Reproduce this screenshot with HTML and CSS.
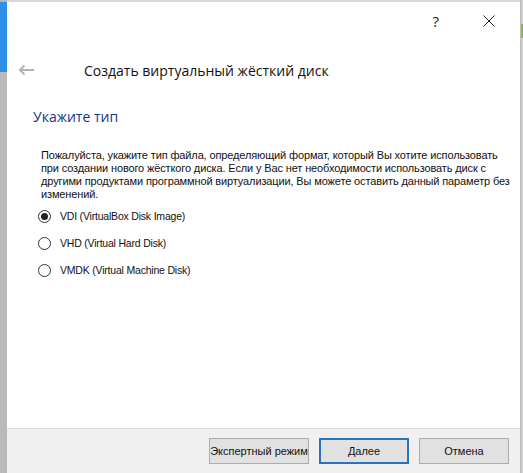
FILE: index.html
```html
<!DOCTYPE html>
<html lang="ru">
<head>
<meta charset="utf-8">
<link rel="stylesheet" href="styles.css">
</head>
<body>
<div class="desk">
  <div class="strip"><div class="strip-blue"></div></div>
  <div class="window">
    <div class="titlebar">
      <span class="tb-help">?</span>
      <span class="tb-close">
        <svg width="12" height="12" viewBox="0 0 12 12"><path d="M0.5 0.5 L11.5 11.5 M11.5 0.5 L0.5 11.5" stroke="#222" stroke-width="1" fill="none"/></svg>
      </span>
    </div>
    <div class="header">
      <svg class="back" width="16" height="12" viewBox="0 0 16 12"><path d="M16 6 H2 M6.5 1.5 L2 6 L6.5 10.5" stroke="#b4b4b4" stroke-width="2" fill="none"/></svg>
      <span class="title">Создать виртуальный жёсткий диск</span>
    </div>
    <div class="content">
      <h2 class="section">Укажите тип</h2>
      <p class="desc">Пожалуйста, укажите тип файла, определяющий формат, который Вы хотите использовать при создании нового жёсткого диска. Если у Вас нет необходимости использовать диск с другими продуктами программной виртуализации, Вы можете оставить данный параметр без изменений.</p>
      <div class="options">
        <label class="opt"><span class="radio checked"></span>VDI (VirtualBox Disk Image)</label>
        <label class="opt"><span class="radio"></span>VHD (Virtual Hard Disk)</label>
        <label class="opt"><span class="radio"></span>VMDK (Virtual Machine Disk)</label>
      </div>
    </div>
    <div class="footer">
      <button class="btn wide">Экспертный режим</button>
      <button class="btn primary">Далее</button>
      <button class="btn">Отмена</button>
    </div>
  </div>
  <div class="rstrip"><div class="rstrip-green"></div></div>
</div>
</body>
</html>
```
FILE: styles.css
```css
html, body {
  margin: 0;
  padding: 0;
  width: 523px;
  height: 473px;
  overflow: hidden;
  background: #d8d8d8;
}
.desk {
  display: flex;
  height: 473px;
}
.strip {
  width: 7px;
  background: #b9b9b9;
  padding-top: 2px;
}
.strip-blue {
  height: 70px;
  background: #2f8ee6;
}
.window {
  margin-top: 2px;
  width: 513px;
  height: 471px;
  background: #fff;
  display: flex;
  flex-direction: column;
  font-family: "Open Sans", "Noto Sans", sans-serif;
  color: #000;
}
.rstrip {
  width: 2px;
  background: #cfcfcf;
  border-left: 1px solid #bdbdbd;
  padding-top: 24px;
}
.rstrip-green {
  height: 14px;
  background: #7cc04a;
}
.titlebar {
  height: 38px;
  flex: none;
  display: flex;
  align-items: center;
  justify-content: flex-end;
  gap: 44px;
  padding-right: 25px;
}
.tb-help {
  font-size: 15px;
  color: #222;
  line-height: 1;
}
.tb-close {
  display: flex;
}
.header {
  height: 60px;
  flex: none;
  display: flex;
  align-items: center;
  padding-left: 11px;
}
.back {
  margin-right: 50px;
}
.title {
  font-size: 14px;
  color: #111;
}
.content {
  flex: 1;
  padding-left: 26px;
  padding-right: 6px;
}
.section {
  margin: 7px 0 0 0;
  font-size: 14px;
  font-weight: normal;
  color: #17358a;
  line-height: 20px;
}
.desc {
  margin: 22px 0 0 8px;
  font-family: "Liberation Sans", Arial, sans-serif;
  font-size: 11px;
  letter-spacing: -0.13px;
  line-height: 13px;
  color: #111;
}
.options {
  margin-top: 8px;
  display: flex;
  flex-direction: column;
  gap: 13px;
  padding-left: 5px;
}
.opt {
  display: flex;
  align-items: center;
  height: 14px;
  font-family: "Liberation Sans", Arial, sans-serif;
  font-size: 10.5px;
  letter-spacing: -0.2px;
  color: #111;
}
.radio {
  width: 11px;
  height: 11px;
  border: 1px solid #333;
  border-radius: 50%;
  margin-right: 9px;
  display: flex;
  align-items: center;
  justify-content: center;
}
.radio.checked::after {
  content: "";
  width: 7px;
  height: 7px;
  border-radius: 50%;
  background: #222;
}
.footer {
  height: 45px;
  flex: none;
  border-top: 1px solid #dcdcdc;
  background: #f0f0f0;
  display: flex;
  justify-content: flex-end;
  align-items: flex-start;
  gap: 10px;
  padding: 9px 11px 0 0;
  box-sizing: border-box;
}
.btn {
  width: 90px;
  height: 26px;
  border: 1px solid #adadad;
  background: #e1e1e1;
  font-family: "Liberation Sans", Arial, sans-serif;
  font-size: 11px;
  color: #111;
  padding: 0;
  white-space: nowrap;
}
.btn.wide {
  width: 100px;
}
.btn.primary {
  border: 2px solid #2a73c0;
}
```
